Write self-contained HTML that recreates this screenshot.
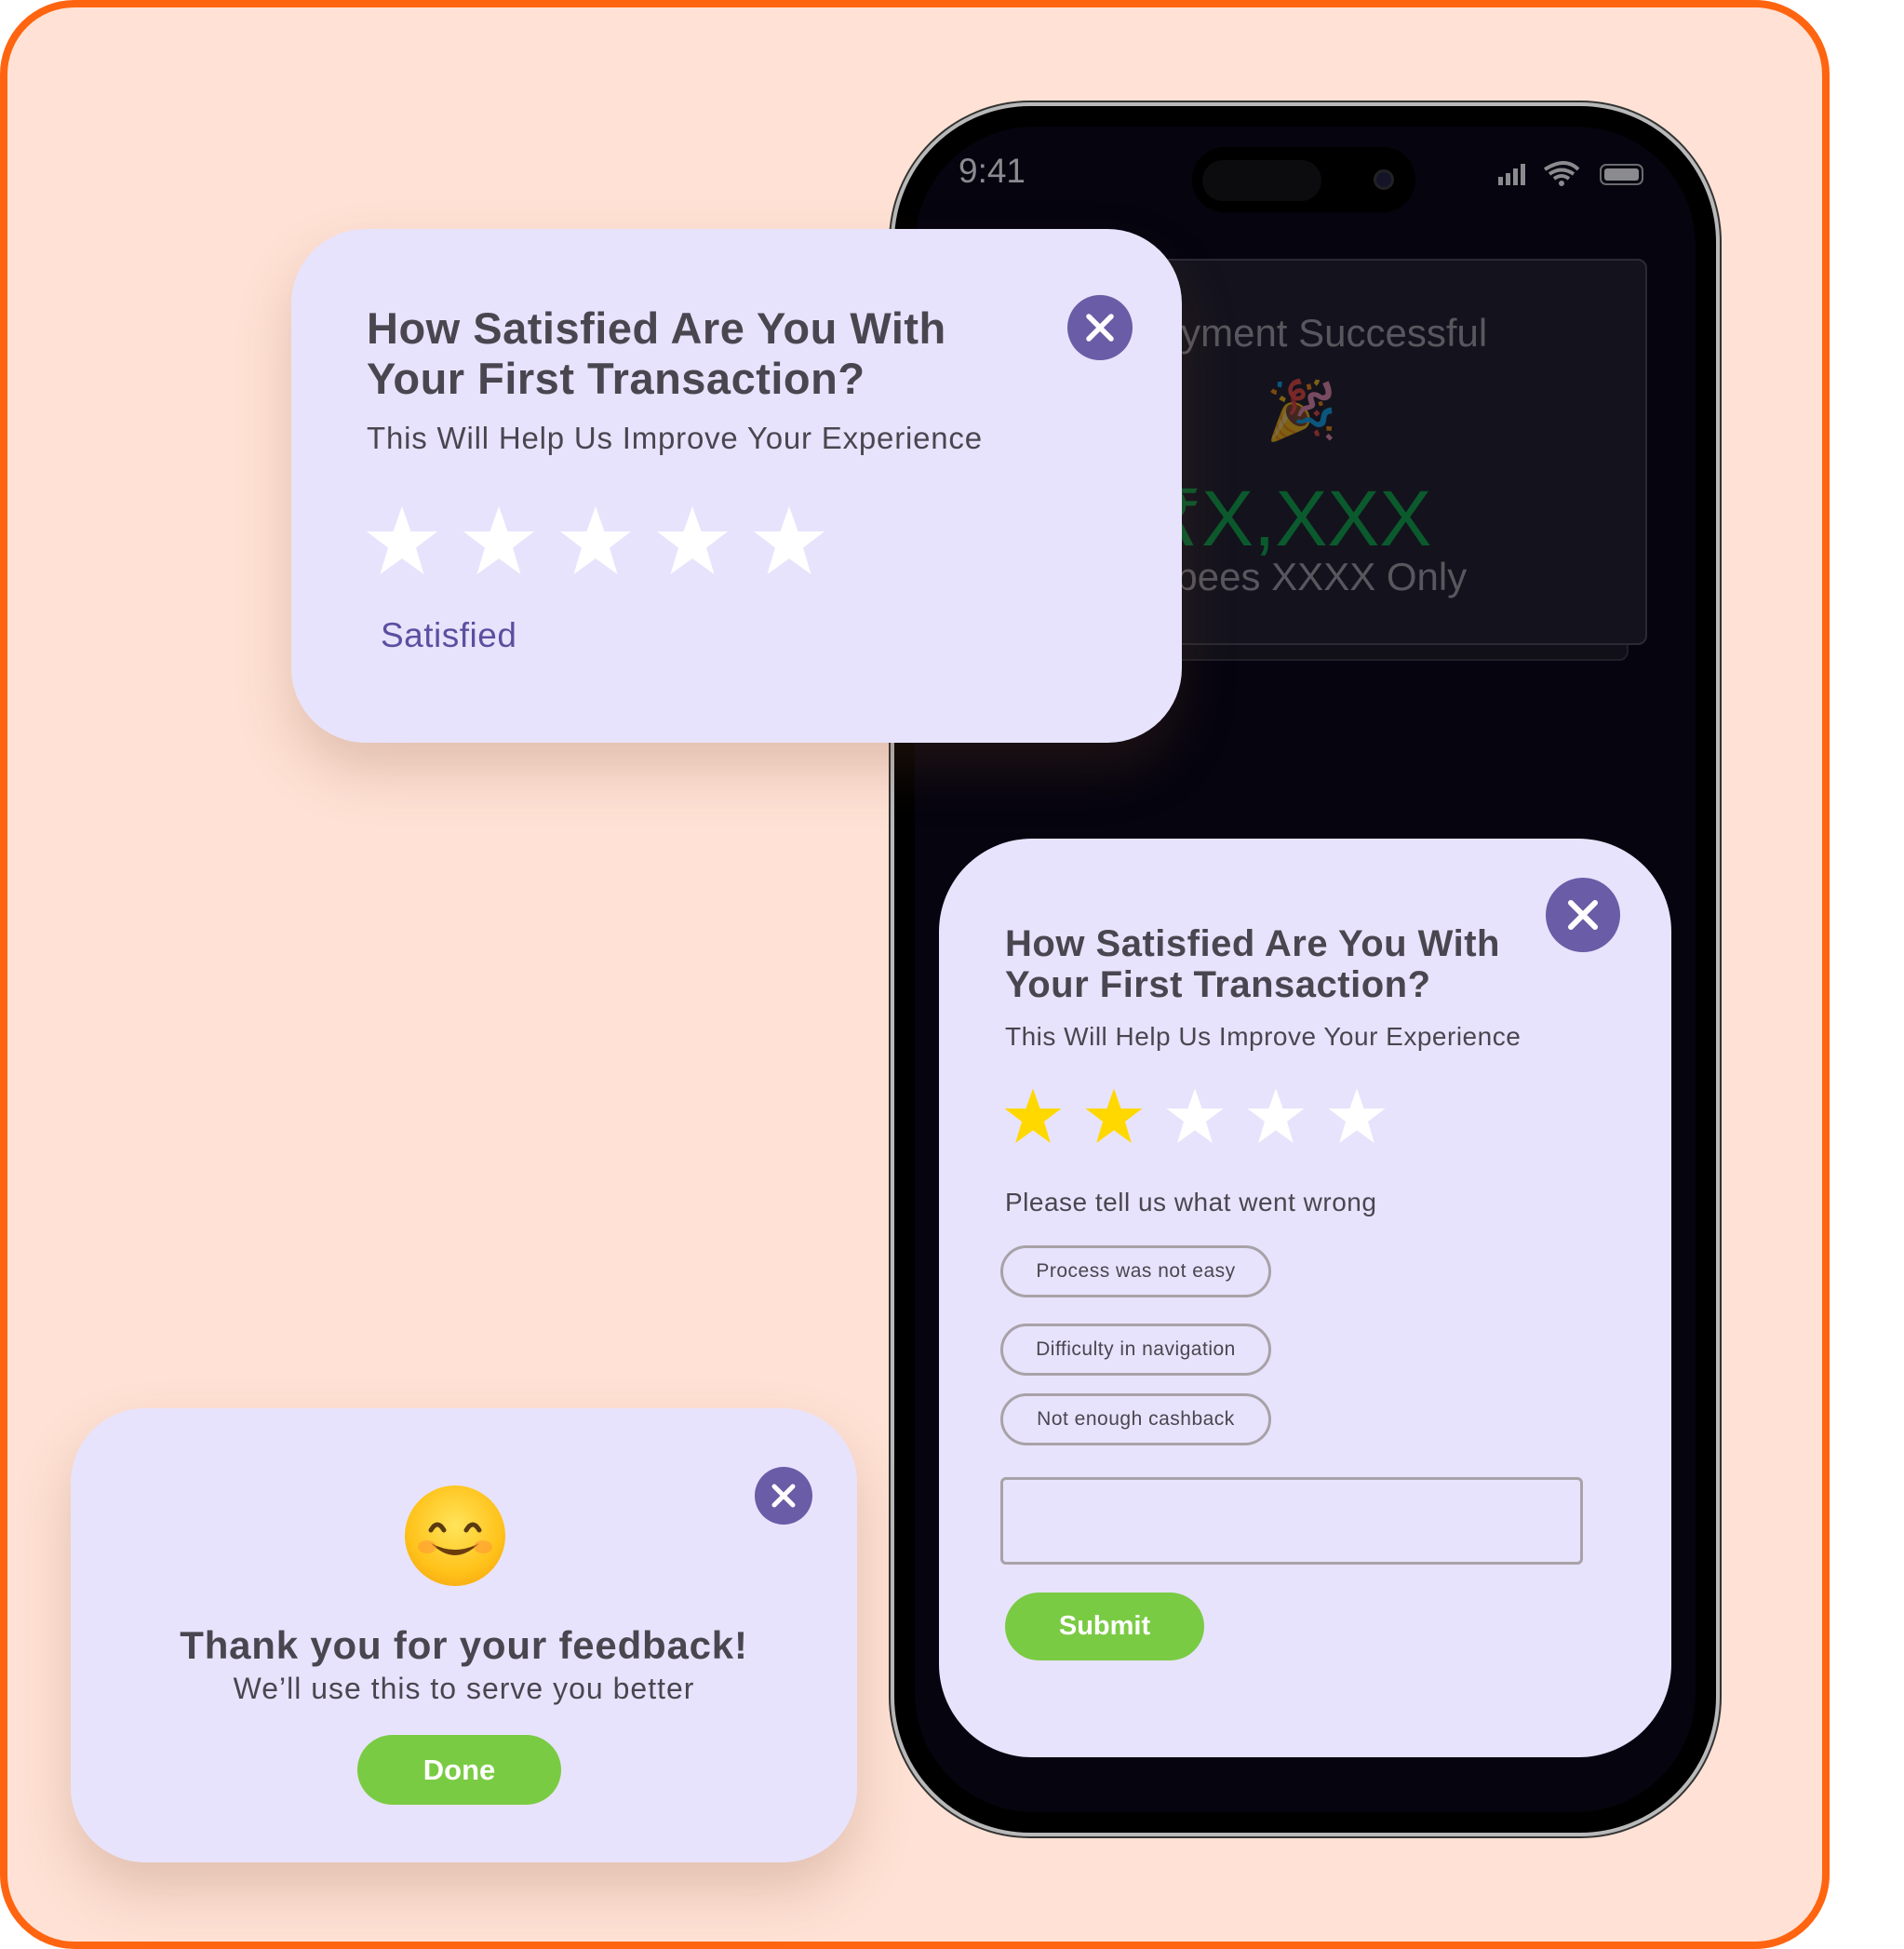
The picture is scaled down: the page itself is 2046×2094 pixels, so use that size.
<!DOCTYPE html>
<html><head><meta charset="utf-8"><style>
*{margin:0;padding:0;box-sizing:border-box}
body{width:2046px;height:2088px;background:#fff;position:relative;overflow:hidden;font-family:"Liberation Sans","DejaVu Sans",sans-serif;color:#4a4650}
.frame{position:absolute;left:0;top:0;width:1966px;height:2094px;background:#ffe2d5;border:8px solid #ff6410;border-radius:80px}
.abs{position:absolute}
.card{position:absolute;background:#e8e3fc;border-radius:80px;box-shadow:0 30px 60px rgba(120,70,40,.22)}
.x{position:absolute;border-radius:50%;background:#6a5ca6}
.x svg{width:100%;height:100%}
.chip{position:absolute;left:1075px;width:291px;height:56px;border:3px solid #a8a2a8;border-radius:28px;font-size:21px;letter-spacing:.5px;display:flex;align-items:center;justify-content:center;color:#4a4650}
.btn{position:absolute;background:#7acb44;color:#fff;font-weight:bold;border-radius:40px;display:flex;align-items:center;justify-content:center}
.ctr{white-space:nowrap;text-align:center}
</style></head><body>
<div class="frame"></div>

<!-- phone -->
<div class="abs" style="left:957px;top:110px;width:891px;height:1863px;border-radius:150px;background:#000;border:4px solid #b9b9b9;box-shadow:0 0 0 2px #333"></div>
<div class="abs" style="left:983px;top:136px;width:839px;height:1811px;border-radius:128px;background:#05040f"></div>
<div class="abs" style="left:1030px;top:163px;font-size:37px;color:#8a8a8f">9:41</div>
<div class="abs" style="left:1281px;top:158px;width:240px;height:70px;border-radius:35px;background:#000"></div>
<div class="abs" style="left:1292px;top:172px;width:128px;height:44px;border-radius:22px;background:#0c0c0e"></div>
<div class="abs" style="left:1476px;top:182px;width:22px;height:22px;border-radius:50%;background:#141428;border:3px solid #222"></div>
<svg class="abs" style="left:1608px;top:172px" width="170" height="30" viewBox="0 0 170 30">
<rect x="2" y="18" width="5" height="9" fill="#8a8a8f"/><rect x="10" y="14" width="5" height="13" fill="#8a8a8f"/><rect x="18" y="9" width="5" height="18" fill="#8a8a8f"/><rect x="26" y="4" width="5" height="23" fill="#8a8a8f"/>
<path d="M52 10 Q74 -4 88 10 M57 15 Q70 6 83 15 M62 20 Q70 14 78 20" stroke="#8a8a8f" stroke-width="4" fill="none"/><circle cx="70" cy="25" r="3" fill="#8a8a8f"/>
<rect x="112" y="5" width="45" height="21" rx="6" fill="none" stroke="#6a6a6f" stroke-width="2"/><rect x="116" y="9" width="37" height="13" rx="3" fill="#8a8a8f"/></svg>
<div class="abs" style="left:1255px;top:325px;width:495px;height:385px;border-radius:10px;background:#111018;border:2px solid #202029"></div>
<div class="abs" style="left:1243px;top:278px;width:527px;height:415px;border-radius:10px;background:#14131d;border:2px solid #2a2a33"></div>
<div class="abs ctr" style="left:1108px;top:334px;width:600px;font-size:42px;color:#58575e">Payment Successful</div>
<div class="abs" style="left:1360px;top:405px;font-size:62px;opacity:.45">🎉</div>
<div class="abs ctr" style="left:1088px;top:508px;width:600px;font-size:84px;color:#0b5a2d">₹X,XXX</div>
<div class="abs ctr" style="left:1093px;top:596px;width:600px;font-size:42px;color:#58575e">Rupees XXXX Only</div>

<!-- card 1 -->
<div class="card" style="left:313px;top:246px;width:957px;height:552px"></div>
<div class="abs" style="left:394px;top:326px;font-size:47px;font-weight:bold;line-height:54px;letter-spacing:.5px">How Satisfied Are You With<br>Your First Transaction?</div>
<div class="abs" style="left:394px;top:452px;font-size:33px;letter-spacing:.8px">This Will Help Us Improve Your Experience</div>
<svg class="abs" style="left:392px;top:542px" width="510" height="80" viewBox="0 0 510 80">
<defs><polygon id="s" points="40,2 49.5,29 78,29 55,46.5 63.5,75 40,58 16.5,75 25,46.5 2,29 30.5,29"/></defs>
<use href="#s" fill="#fff"/><use href="#s" x="104" fill="#fff"/><use href="#s" x="208" fill="#fff"/><use href="#s" x="312" fill="#fff"/><use href="#s" x="416" fill="#fff"/></svg>
<div class="abs" style="left:409px;top:662px;font-size:37px;color:#5b4fa0;letter-spacing:.5px">Satisfied</div>
<div class="x" style="left:1147px;top:317px;width:70px;height:70px"><svg viewBox="0 0 70 70"><path d="M23 23 L47 47 M47 23 L23 47" stroke="#fff" stroke-width="5.5" stroke-linecap="round"/></svg></div>

<!-- card 2 -->
<div class="abs" style="left:1009px;top:901px;width:787px;height:987px;background:#e8e3fc;border-radius:100px"></div>
<div class="x" style="left:1661px;top:943px;width:80px;height:80px"><svg viewBox="0 0 80 80"><path d="M27 27 L53 53 M53 27 L27 53" stroke="#fff" stroke-width="6" stroke-linecap="round"/></svg></div>
<div class="abs" style="left:1080px;top:992px;font-size:40px;font-weight:bold;line-height:44px;letter-spacing:.5px">How Satisfied Are You With<br>Your First Transaction?</div>
<div class="abs" style="left:1080px;top:1098px;font-size:28px;letter-spacing:.5px">This Will Help Us Improve Your Experience</div>
<svg class="abs" style="left:1078px;top:1168px" width="420" height="64" viewBox="0 0 420 64">
<defs><polygon id="t" points="32,1.5 39.6,23 62.5,23 44,37 50.8,60 32,46.4 13.2,60 20,37 1.5,23 24.4,23"/></defs>
<use href="#t" fill="#ffd800"/><use href="#t" x="87" fill="#ffd800"/><use href="#t" x="174" fill="#fff"/><use href="#t" x="261" fill="#fff"/><use href="#t" x="348" fill="#fff"/></svg>
<div class="abs" style="left:1080px;top:1276px;font-size:28px;letter-spacing:.5px">Please tell us what went wrong</div>
<div class="chip" style="top:1338px">Process was not easy</div>
<div class="chip" style="top:1422px">Difficulty in navigation</div>
<div class="chip" style="top:1497px">Not enough cashback</div>
<div class="abs" style="left:1075px;top:1587px;width:626px;height:94px;border:3px solid #a8a2a8;border-radius:6px"></div>
<div class="btn" style="left:1080px;top:1711px;width:214px;height:73px;font-size:29px">Submit</div>

<!-- card 3 -->
<div class="card" style="left:76px;top:1513px;width:845px;height:488px"></div>
<div class="x" style="left:811px;top:1576px;width:62px;height:62px"><svg viewBox="0 0 62 62"><path d="M21 21 L41 41 M41 21 L21 41" stroke="#fff" stroke-width="5" stroke-linecap="round"/></svg></div>
<div class="abs" style="left:435px;top:1596px;width:108px;height:108px;border-radius:50%;background:radial-gradient(circle at 50% 40%,#ffe45a,#ffc21a 60%,#f29a0c)"></div>
<svg class="abs" style="left:435px;top:1596px" width="108" height="108" viewBox="0 0 108 108"><path d="M28 48 Q35 36 42 48 M66 48 Q73 36 80 48" stroke="#5a3a10" stroke-width="5" fill="none" stroke-linecap="round"/><path d="M28 62 Q54 88 80 62 Q54 76 28 62Z" fill="#6a3d0e"/><ellipse cx="24" cy="66" rx="10" ry="7" fill="#ff8a3a" opacity=".45"/><ellipse cx="84" cy="66" rx="10" ry="7" fill="#ff8a3a" opacity=".45"/></svg>
<div class="abs" style="left:76px;top:1744px;width:845px;text-align:center;font-size:42px;font-weight:bold;letter-spacing:.8px">Thank you for your feedback!</div>
<div class="abs" style="left:76px;top:1796px;width:845px;text-align:center;font-size:32px;letter-spacing:1px">We’ll use this to serve you better</div>
<div class="btn" style="left:384px;top:1864px;width:219px;height:75px;font-size:31px">Done</div>
</body></html>
